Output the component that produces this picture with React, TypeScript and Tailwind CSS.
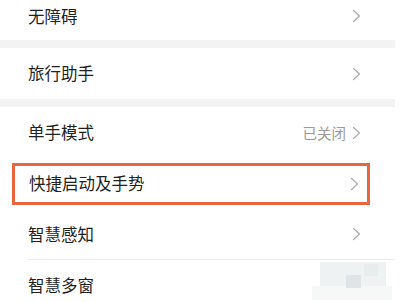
import type { ReactNode } from 'react';

const font = { fontFamily: '"Noto Sans CJK SC", "Noto Sans", sans-serif' };

function Chevron() {
  return (
    <svg width="9" height="14" viewBox="0 0 9 14" className="shrink-0">
      <path d="M1.5 1.5 L7.5 7 L1.5 12.5" fill="none" stroke="#ababab" strokeWidth="1.2" strokeLinecap="round" strokeLinejoin="round" />
    </svg>
  );
}

function Row({ label, value, className = 'h-[51px]' }: { label: string; value?: string; className?: string }) {
  return (
    <div className={`flex items-center pl-[28px] pr-[34px] ${className}`}>
      <span className="text-[16.5px] text-[#1f1f1f]">{label}</span>
      <div className="ml-auto flex items-center gap-[6px]">
        {value && <span className="text-[14.5px] text-[#9a9a9a]">{value}</span>}
        <Chevron />
      </div>
    </div>
  );
}

function Band() {
  return <div className="h-[8px] bg-[#f3f3f3]" />;
}

function Mosaic({ children }: { children?: ReactNode }) {
  return (
    <div className="pointer-events-none absolute left-[312px] top-[256px] h-[46px] w-[86px]">
      <div className="absolute left-[8px] top-[6px] h-[24px] w-[66px] bg-[#eef2f3]" />
      <div className="absolute left-[0px] top-[30px] h-[14px] w-[80px] bg-[#f6f8f8]" />
      <div className="absolute left-[34px] top-[19px] h-[13px] w-[15px] bg-[#dfe5e6]" />
      <div className="absolute left-[52px] top-[8px] h-[12px] w-[14px] bg-[#e7eced]" />
      {children}
    </div>
  );
}

export default function App() {
  return (
    <div className="relative h-[302px] w-[403px] overflow-hidden bg-white" style={font}>
      <div className="w-[395px]">
        <Row label="无障碍" className="h-[40px] pb-[8px]" />
        <Band />
        <Row label="旅行助手" className="h-[51px]" />
        <Band />
        <Row label="单手模式" value="已关闭" className="h-[51px]" />
        <div className="flex h-[51px] items-center pl-[12px]">
          <div className="flex h-[42px] w-[358px] items-center border-[3px] border-[#e9653e] pl-[14px] pr-[8px]">
            <span className="text-[16.5px] text-[#1f1f1f]">快捷启动及手势</span>
            <div className="ml-auto">
              <Chevron />
            </div>
          </div>
        </div>
        <Row label="智慧感知" className="h-[50px]" />
        <div className="ml-[28px] h-px bg-[#ececec]" />
        <Row label="智慧多窗" className="h-[50px]" />
      </div>
      <Mosaic />
    </div>
  );
}
